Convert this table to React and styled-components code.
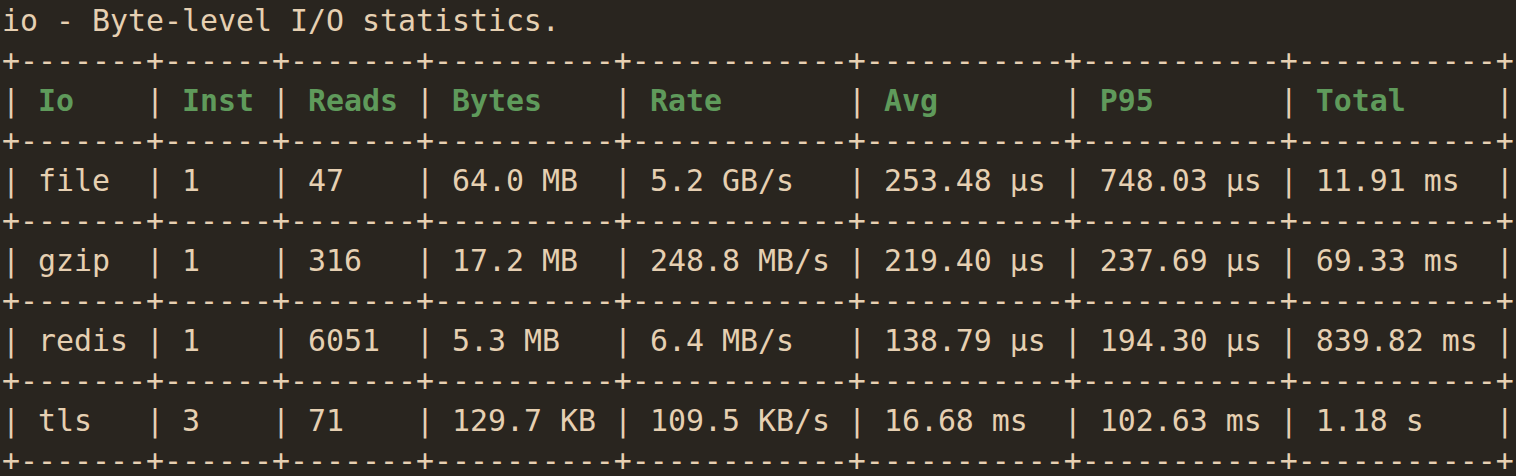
import React, { Fragment } from 'react';
import styled, { createGlobalStyle } from 'styled-components';

const GlobalStyle = createGlobalStyle`
  html, body {
    margin: 0;
    padding: 0;
    background: #29251f;
  }
`

const Terminal = styled.div`
  width: 1516px;
  height: 476px;
  box-sizing: border-box;
  padding: 1px 0 0 2px;
  background: #29251f;
  color: #e6d0b2;
  font-family: "DejaVu Sans Mono", "Liberation Mono", monospace;
  font-size: 29.9px;
  line-height: 40px;
  overflow: hidden;
`

const Line = styled.div`
  white-space: pre;
  height: 40px;
`

const Head = styled.span`
  color: #5f9a5b;
  font-weight: bold;
`

const columns = ['Io', 'Inst', 'Reads', 'Bytes', 'Rate', 'Avg', 'P95', 'Total'];

const rows = [
  ['file', '1', '47', '64.0 MB', '5.2 GB/s', '253.48 µs', '748.03 µs', '11.91 ms'],
  ['gzip', '1', '316', '17.2 MB', '248.8 MB/s', '219.40 µs', '237.69 µs', '69.33 ms'],
  ['redis', '1', '6051', '5.3 MB', '6.4 MB/s', '138.79 µs', '194.30 µs', '839.82 ms'],
  ['tls', '3', '71', '129.7 KB', '109.5 KB/s', '16.68 ms', '102.63 ms', '1.18 s'],
];

const widths = columns.map((c, i) =>
  Math.max(c.length, ...rows.map(r => r[i].length))
);

const rule = '+' + widths.map(w => '-'.repeat(w + 2)).join('+') + '+';

const Row = ({ cells, header }) => (
  <Line>
    {cells.map((c, i) => (
      <Fragment key={i}>
        {'| '}
        {header ? <Head>{c.padEnd(widths[i])}</Head> : c.padEnd(widths[i])}
        {' '}
      </Fragment>
    ))}
    {'|'}
  </Line>
);

const App = () => {
  return (
    <Fragment>
      <GlobalStyle />
      <Terminal>
        <Line>io - Byte-level I/O statistics.</Line>
        <Line>{rule}</Line>
        <Row cells={columns} header />
        <Line>{rule}</Line>
        {rows.map((r, i) => (
          <Fragment key={i}>
            <Row cells={r} />
            <Line>{rule}</Line>
          </Fragment>
        ))}
      </Terminal>
    </Fragment>
  );
}

export default App;
